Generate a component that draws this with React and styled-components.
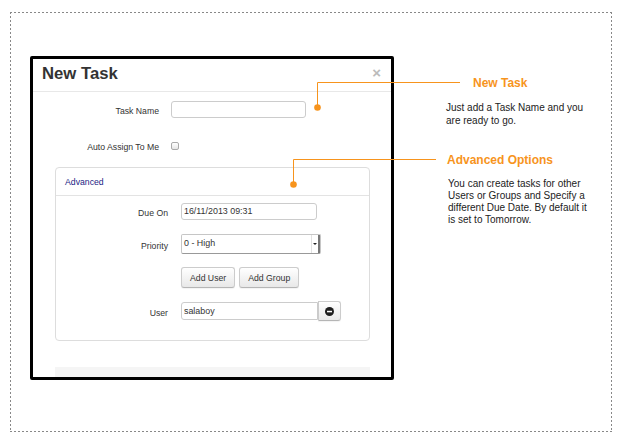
import styled, { createGlobalStyle } from "styled-components";

const ORANGE = "#f7941d";

const GlobalStyle = createGlobalStyle`
    html, body {
        margin: 0;
        padding: 0;
        background: #fff;
    }
    body {
        font-family: "Liberation Sans", Arial, sans-serif;
        color: #333;
    }
`;

const Page = styled.div`
    position: relative;
    width: 622px;
    height: 442px;
    padding: 12px 0 0 10px;
    box-sizing: border-box;
`;

const Frame = styled.div`
    width: 602px;
    height: 420px;
    box-sizing: border-box;
    padding: 44px 0 0 20px;
    display: flex;
    align-items: flex-start;
    background:
        linear-gradient(to right, #888 50%, transparent 50%) 0 0 / 4px 1px repeat-x,
        linear-gradient(to right, #888 50%, transparent 50%) 0 100% / 4px 1px repeat-x,
        linear-gradient(to bottom, #888 50%, transparent 50%) 0 0 / 1px 4px repeat-y,
        linear-gradient(to bottom, #888 50%, transparent 50%) 100% 0 / 1px 4px repeat-y;
`;

const Modal = styled.section`
    flex-shrink: 0;
    width: 364px;
    height: 324px;
    box-sizing: border-box;
    border: 3px solid #000;
    border-radius: 2px;
    background: #fff;
    overflow: hidden;
`;

const ModalHeader = styled.header`
    height: 33px;
    box-sizing: border-box;
    border-bottom: 1px solid #e8e8e8;
    padding: 0 10px 2px 9px;
    display: flex;
    align-items: center;
    justify-content: space-between;
`;

const Title = styled.h1`
    margin: 0;
    font-size: 16.7px;
    font-weight: bold;
    line-height: 1;
    color: #333;
`;

const Close = styled.span`
    font-size: 15px;
    font-weight: bold;
    line-height: 1;
    color: #bbb;
    margin-top: -3px;
`;

const ModalBody = styled.div`
    padding-top: 9px;
`;

const FormGrid = styled.div`
    display: grid;
    grid-template-columns: 126px 135px;
    grid-auto-rows: 17px;
    column-gap: 12px;
    row-gap: 19px;
    align-items: center;
`;

const Label = styled.label`
    text-align: right;
    font-size: 8.7px;
    color: #333;
    padding-top: 3px;
`;

const TextInput = styled.input`
    width: ${(p) => p.$w}px;
    height: ${(p) => p.$h || 17}px;
    box-sizing: border-box;
    margin: 0;
    padding: 0 2px;
    border: 1px solid #ccc;
    border-radius: ${(p) => (p.$joined ? "3px 0 0 3px" : "3px")};
    font-family: "Liberation Sans", Arial, sans-serif;
    font-size: 8.9px;
    color: #333;
    background: #fff;
    outline: none;
`;

const Checkbox = styled.span`
    justify-self: start;
    width: 8px;
    height: 8px;
    box-sizing: border-box;
    border: 1px solid #aaa;
    border-radius: 2px;
    background: linear-gradient(#fff, #e6e6e6);
    margin-top: 1px;
`;

const Panel = styled.div`
    margin: 13px 21px 0 22px;
    border: 1px solid #ddd;
    border-radius: 4px;
`;

const PanelHeading = styled.div`
    height: 28px;
    box-sizing: border-box;
    border-bottom: 1px solid #e3e3e3;
    padding-left: 9px;
    display: flex;
    align-items: center;
    font-size: 8.7px;
    color: #1c1c84;
`;

const PanelBody = styled.div`
    padding: 5px 0 19px;
    display: grid;
    grid-template-columns: 112px auto;
    grid-template-rows: 20px 20px 21px 20px;
    column-gap: 13px;
    row-gap: 13px;
    align-items: center;
`;

const Select = styled.div`
    width: 140px;
    height: 20px;
    box-sizing: border-box;
    border: 1px solid #c6c6c6;
    border-bottom-color: #999;
    border-radius: 2px;
    background: #fff;
    display: flex;
    justify-content: space-between;
    font-size: 8.9px;
    color: #333;
    padding-left: 2px;
`;

const SelectText = styled.span`
    padding-top: 3px;
`;

const SelectArrow = styled.span`
    width: 6px;
    border-left: 1px solid #e2e2e2;
    border-right: 2px solid #777;
    display: flex;
    align-items: center;
    justify-content: center;

    &::after {
        content: "";
        border-left: 2px solid transparent;
        border-right: 2px solid transparent;
        border-top: 2px solid #222;
    }
`;

const ButtonRow = styled.div`
    grid-column: 2;
    display: flex;
    gap: 4px;
`;

const Button = styled.button`
    height: 21px;
    margin: 0;
    padding: 0 ${(p) => (p.$icon ? 0 : 8)}px;
    width: ${(p) => (p.$icon ? "23px" : "auto")};
    box-sizing: border-box;
    border: 1px solid #ccc;
    border-bottom-color: #b5b5b5;
    border-radius: ${(p) => (p.$joined ? "0 3px 3px 0" : "3px")};
    background: linear-gradient(#fff, #e8e8e8);
    box-shadow: 0 1px 1px rgba(0, 0, 0, 0.05);
    font-family: "Liberation Sans", Arial, sans-serif;
    font-size: 8.7px;
    color: #333;
    display: flex;
    align-items: center;
    justify-content: center;
`;

const InputGroup = styled.div`
    display: flex;
    align-items: center;
`;

const Footer = styled.div`
    margin: 26px 21px 0 22px;
    height: 20px;
    background: #f5f5f5;
`;

const Notes = styled.aside`
    margin-left: 52px;
    padding-top: 20px;
    display: flex;
    flex-direction: column;
`;

const NoteTitle = styled.h2`
    margin: ${(p) => p.$top}px 0 0 ${(p) => p.$indent}px;
    font-size: 12px;
    font-weight: bold;
    line-height: 14px;
    color: ${ORANGE};
`;

const NoteText = styled.p`
    margin: 11px 0 0 ${(p) => p.$indent}px;
    width: 146px;
    font-size: 10px;
    line-height: ${(p) => p.$lh}px;
    color: #222;
`;

const Connectors = styled.svg`
    position: absolute;
    left: 0;
    top: 0;
    pointer-events: none;
`;

const MinusIcon = () => (
    <svg width="9" height="9" viewBox="0 0 9 9">
        <circle cx="4.5" cy="4.5" r="4.5" fill="#1e1e1e" />
        <rect x="2" y="3.8" width="5" height="1.5" fill="#fff" />
    </svg>
);

const App = () => {
    return (
        <Page>
            <GlobalStyle />
            <Frame>
                <Modal>
                    <ModalHeader>
                        <Title>New Task</Title>
                        <Close>×</Close>
                    </ModalHeader>
                    <ModalBody>
                        <FormGrid>
                            <Label>Task Name</Label>
                            <TextInput $w={135} defaultValue="" />
                            <Label>Auto Assign To Me</Label>
                            <Checkbox />
                        </FormGrid>
                        <Panel>
                            <PanelHeading>Advanced</PanelHeading>
                            <PanelBody>
                                <Label>Due On</Label>
                                <TextInput $w={136} defaultValue="16/11/2013 09:31" />
                                <Label>Priority</Label>
                                <Select>
                                    <SelectText>0 - High</SelectText>
                                    <SelectArrow />
                                </Select>
                                <ButtonRow>
                                    <Button>Add User</Button>
                                    <Button>Add Group</Button>
                                </ButtonRow>
                                <Label>User</Label>
                                <InputGroup>
                                    <TextInput $w={137} $h={18} $joined defaultValue="salaboy" />
                                    <Button $icon $joined style={{ height: 20 }}>
                                        <MinusIcon />
                                    </Button>
                                </InputGroup>
                            </PanelBody>
                        </Panel>
                        <Footer />
                    </ModalBody>
                </Modal>
                <Notes>
                    <NoteTitle $top={0} $indent={27}>New Task</NoteTitle>
                    <NoteText $indent={0} $lh={13}>
                        Just add a Task Name and you are ready to go.
                    </NoteText>
                    <NoteTitle $top={26} $indent={1}>Advanced Options</NoteTitle>
                    <NoteText $indent={2} $lh={12}>
                        You can create tasks for other Users or Groups and Specify a different Due Date. By default it is set to Tomorrow.
                    </NoteText>
                </Notes>
            </Frame>
            <Connectors width="622" height="442">
                <path d="M317.5 107 V82.5 H460" fill="none" stroke={ORANGE} strokeWidth="1" />
                <circle cx="317.5" cy="107.5" r="3.3" fill={ORANGE} />
                <path d="M293.5 184 V159.5 H436" fill="none" stroke={ORANGE} strokeWidth="1" />
                <circle cx="293.5" cy="184.5" r="3.3" fill={ORANGE} />
            </Connectors>
        </Page>
    );
};

export default App;
